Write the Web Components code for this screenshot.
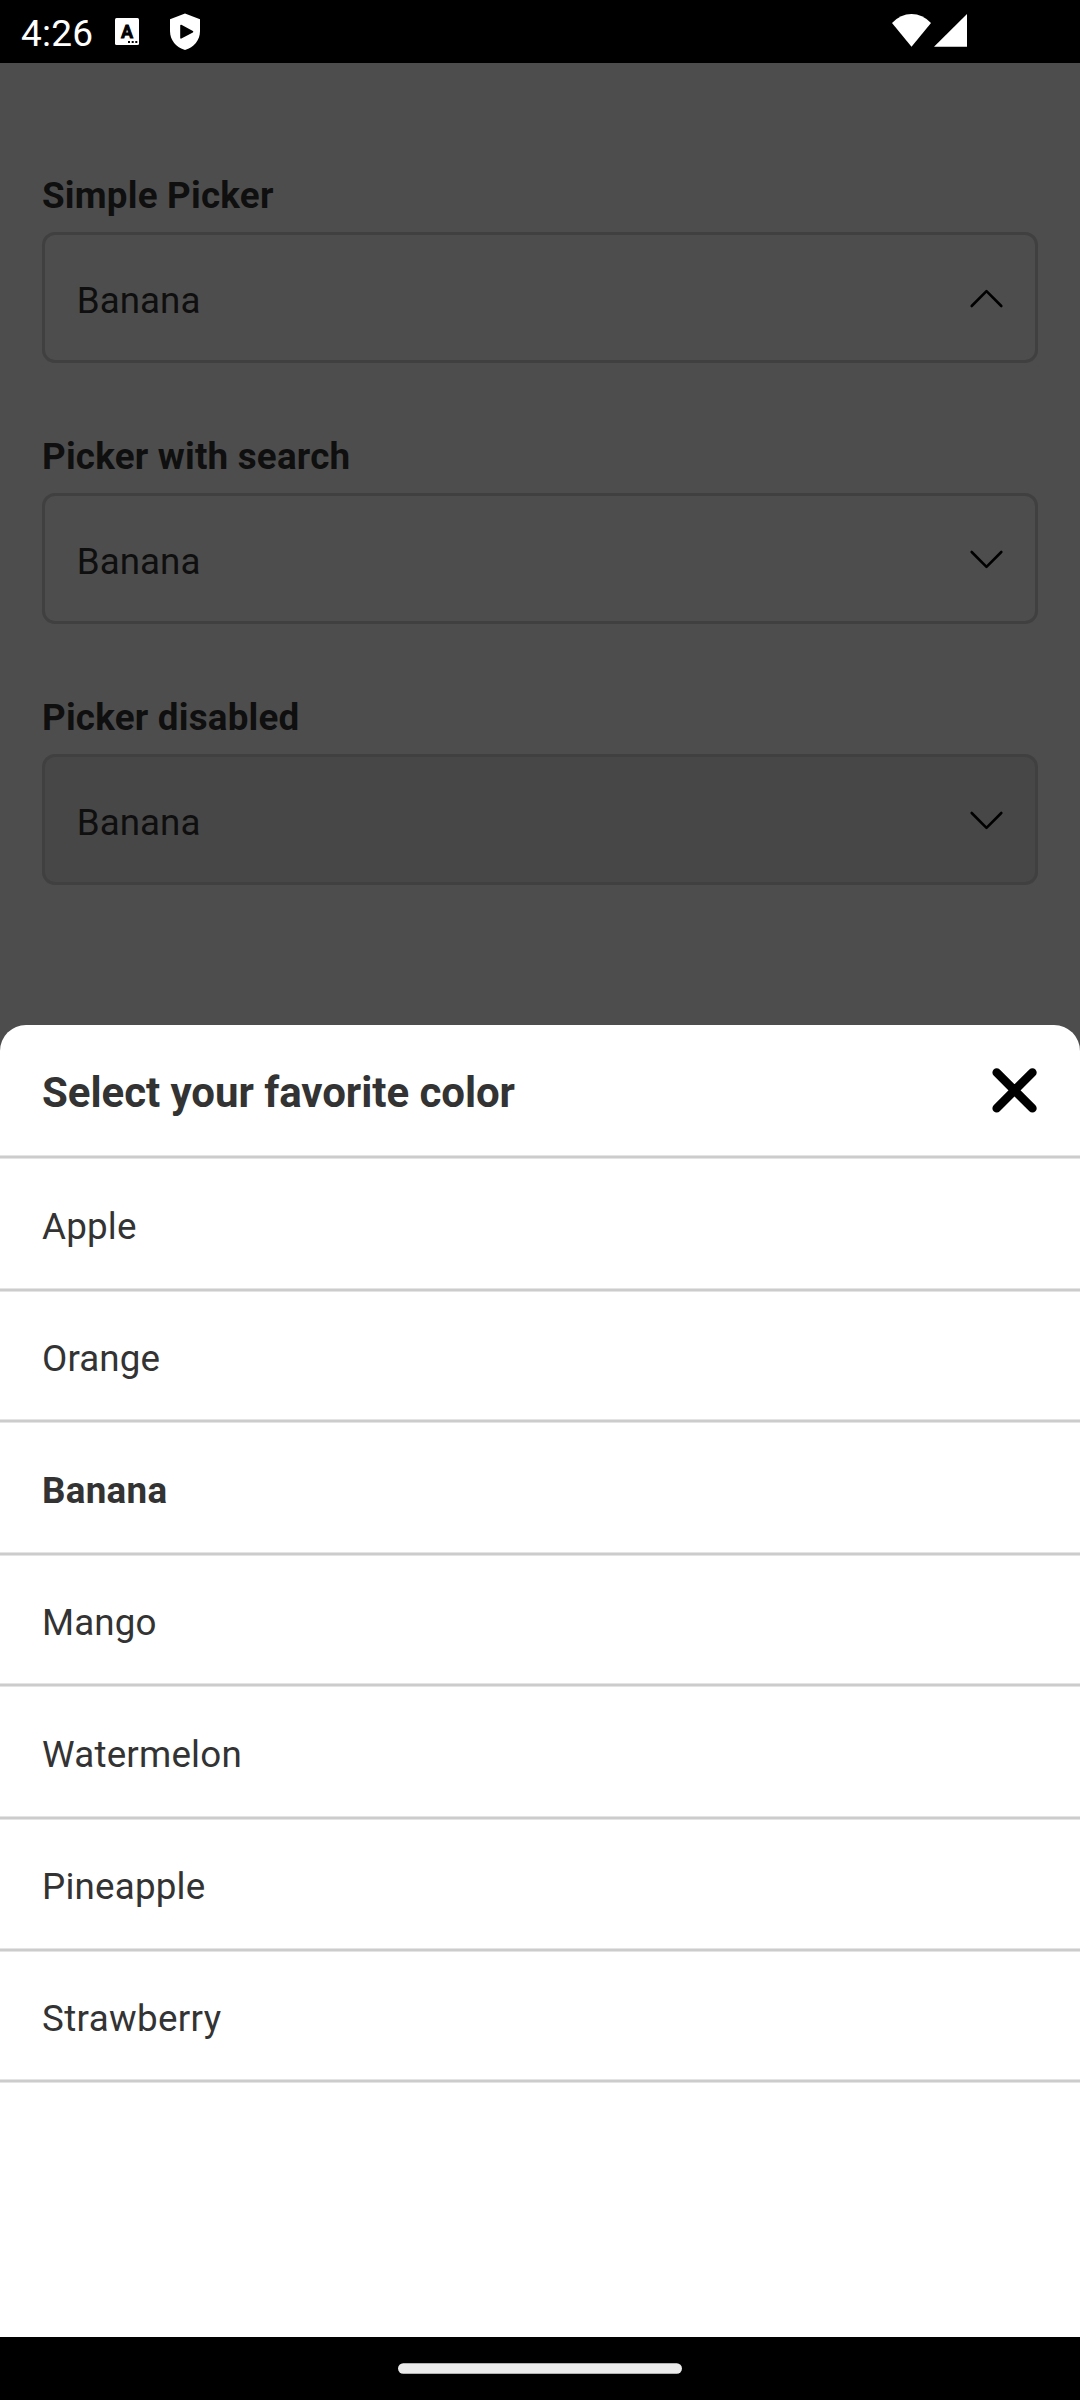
<!DOCTYPE html>
<html lang="en">
<head>
<meta charset="utf-8">
<title>Picker</title>
<style>
html, body { margin: 0; padding: 0; background: #4d4d4d; }
body { width: 1080px; height: 2400px; overflow: hidden; font-family: Roboto, sans-serif; }
</style>
</head>
<body>
<app-screen>
  <status-bar slot="status">4:26</status-bar>
  <picker-field label="Simple Picker" open>Banana</picker-field>
  <picker-field label="Picker with search">Banana</picker-field>
  <picker-field label="Picker disabled" disabled>Banana</picker-field>
  <picker-sheet slot="sheet">
    <span slot="title">Select your favorite color</span>
    <picker-option style="--h:133px;--pad:46px">Apple</picker-option>
    <picker-option style="--h:131px;--pad:45px;--track:.1px">Orange</picker-option>
    <picker-option style="--h:133px;--pad:46px;--track:.3px" selected>Banana</picker-option>
    <picker-option style="--h:131px;--pad:45px;--track:.1px">Mango</picker-option>
    <picker-option style="--h:133px;--pad:46px">Watermelon</picker-option>
    <picker-option style="--h:132px;--pad:45px">Pineapple</picker-option>
    <picker-option style="--h:131px;--pad:45px;--track:.35px">Strawberry</picker-option>
  </picker-sheet>
  <nav-bar slot="nav"></nav-bar>
</app-screen>
<script>
function define(name, html) {
  const template = document.createElement('template');
  template.innerHTML = html;
  customElements.define(name, class extends HTMLElement {
    constructor() {
      super();
      this.attachShadow({ mode: 'open' }).append(template.content.cloneNode(true));
    }
    connectedCallback() {
      const label = this.shadowRoot.querySelector('[data-label]');
      if (label) label.textContent = this.getAttribute('label');
    }
  });
}

define('app-screen', `
<style>
:host { display: flex; flex-direction: column; width: 1080px; height: 2400px; background: #4d4d4d; }
main { box-sizing: border-box; height: 962px; flex: none; padding: 111px 42px 0; display: flex; flex-direction: column; gap: 72px; }
</style>
<slot name="status"></slot>
<main><slot></slot></main>
<slot name="sheet"></slot>
<slot name="nav"></slot>`);

define('status-bar', `
<style>
:host { display: flex; box-sizing: border-box; height: 63px; flex: none; background: #000; color: #fff; padding-left: 21px; font-size: 37px; line-height: 68px; }
.time { width: 94px; letter-spacing: .2px; }
.gap { flex: 1; }
svg { display: block; flex: none; }
</style>
<div class="time"><slot></slot></div>
<svg width="90" height="63" viewBox="115 0 90 63">
  <rect x="115" y="18" width="24" height="27" rx="1.5" fill="#fff"/>
  <text x="127" y="37.8" text-anchor="middle" font-family="Roboto, sans-serif" font-weight="700" font-size="18" fill="#000" stroke="#000" stroke-width=".8">A</text>
  <path d="M128 41h2v2h-2zM131.700 41h2v2h-2zM135.300 41h2v2h-2z" fill="#000"/>
  <path d="M185 13.500L200 19.200V31C200 40 194 47.500 185 50C176 47.500 170 40 170 31V19.200Z" fill="#fff"/>
  <path d="M181 25.500L192.500 31.700L181 37.800Z" fill="#000" stroke="#000" stroke-width="1.600" stroke-linejoin="round"/>
</svg>
<div class="gap"></div>
<svg width="190" height="63" viewBox="890 0 190 63">
  <path d="M892 23Q900.500 14 911.500 14T931 23L911.500 46.700Z" fill="#fff"/>
  <path d="M934 46.700L967 14V46.700Z" fill="#fff"/>
</svg>`);

define('picker-field', `
<style>
:host { display: flex; flex-direction: column; gap: 15px; color: #0f0f0f; font-size: 36.75px; line-height: 43px; }
.label { font-weight: 700; height: 43px; letter-spacing: .22px; }
.box { box-sizing: border-box; height: 131px; border: 3px solid #404040; border-radius: 13px; padding-left: 31.750px; padding-right: 31px; display: flex; align-items: center; justify-content: space-between; }
.value { padding-top: 6px; letter-spacing: .05px; }
:host([disabled]) .box { background: #474747; }
.up, :host([open]) .down { display: none; }
:host([open]) .up { display: inline; }
svg { display: block; }
</style>
<div class="label" data-label></div>
<div class="box">
  <div class="value"><slot></slot></div>
  <svg width="36" height="125" viewBox="968 3 36 125" fill="none" stroke="#000" stroke-width="2.600" stroke-linecap="round" stroke-linejoin="round">
    <path class="down" d="M971.700 59L986.500 73.800L1001.300 59"/>
    <path class="up" d="M971.700 74L986.500 59.200L1001.300 74"/>
  </svg>
</div>`);

define('sheet-divider', `
<style>
:host { display: block; box-sizing: border-box; height: 4px; flex: none; background: #ccc; border: solid #e4e4e4; border-width: 1px 0; }
</style>`);

define('picker-sheet', `
<style>
:host { display: flex; flex-direction: column; height: 1312px; flex: none; background: #fff; border-radius: 26px 26px 0 0; color: #333; }
header { box-sizing: border-box; height: 130px; padding: 0 42px; display: flex; align-items: center; justify-content: space-between; }
.title { font-size: 42px; line-height: 50px; font-weight: 700; padding-top: 6px; letter-spacing: -.05px; }
svg { display: block; }
</style>
<header>
  <div class="title"><slot name="title"></slot></div>
  <svg width="48" height="48" viewBox="990 1066 48 48" stroke="#000" stroke-width="8.600" stroke-linecap="round"><path d="M996.700 1072.500L1032.400 1108.300M1032.400 1072.500L996.700 1108.300"/></svg>
</header>
<sheet-divider></sheet-divider>
<slot></slot>`);

define('picker-option', `
<style>
:host { display: flex; flex-direction: column; justify-content: space-between; height: var(--h); flex: none; font-size: 36.75px; line-height: 43px; letter-spacing: var(--track, .2px); }
:host([selected]) { font-weight: 700; }
.text { padding: var(--pad) 42px 0; }
</style>
<div class="text"><slot></slot></div>
<sheet-divider></sheet-divider>`);

define('nav-bar', `
<style>
:host { display: flex; box-sizing: border-box; justify-content: center; height: 63px; flex: none; background: #000; padding-top: 25px; }
svg { display: block; }
</style>
<svg width="284" height="12"><rect x="0" y="1.300" width="284" height="10.400" rx="5.200" fill="#ebebeb"/></svg>`);
</script>
</body>
</html>
